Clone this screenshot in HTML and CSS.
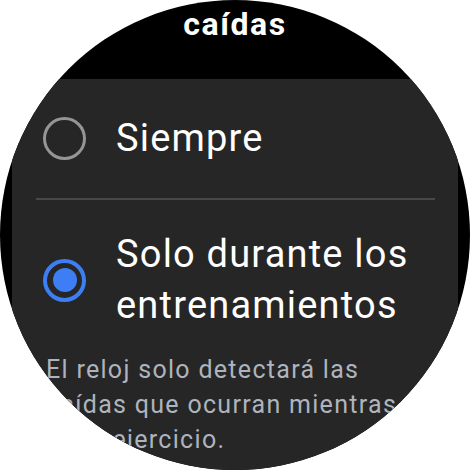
FILE: index.html
```html
<!DOCTYPE html>
<html lang="es">
<head>
<meta charset="utf-8">
<link rel="stylesheet" href="styles.css">
</head>
<body>
<div class="watch">
  <div class="title">caídas</div>
  <div class="card">
    <div class="option first">
      <span class="radio"></span>
      <span class="label">Siempre</span>
    </div>
    <div class="divider"></div>
    <div class="option second">
      <span class="radio on"><span class="dot"></span></span>
      <span class="label">Solo durante los entrenamientos</span>
    </div>
    <p class="desc">El reloj solo detectará las caídas que ocurran mientras hace ejercicio.</p>
  </div>
</div>
</body>
</html>
```
FILE: styles.css
```css
html, body {
  margin: 0;
  padding: 0;
  background: #ffffff;
}
.watch {
  width: 470px;
  height: 470px;
  border-radius: 50%;
  overflow: hidden;
  background: #000000;
  display: flex;
  flex-direction: column;
  font-family: Roboto, "Noto Sans", sans-serif;
}
.title {
  height: 79px;
  box-sizing: border-box;
  padding-top: 4px;
  text-align: center;
  color: #ffffff;
  font-weight: 700;
  font-size: 32px;
  line-height: 40px;
  letter-spacing: 1.6px;
}
.card {
  flex: 1;
  margin: 0 12px;
  background: #262626;
  border-radius: 10px 10px 0 0;
  padding: 0 23px 0 24px;
}
.option {
  display: flex;
  align-items: center;
  padding-left: 7px;
}
.option.first {
  height: 119px;
}
.option.second {
  height: 144px;
  padding-top: 8px;
}
.radio {
  flex: none;
  width: 43px;
  height: 43px;
  box-sizing: border-box;
  border-radius: 50%;
  border: 3px solid #959595;
  display: flex;
  align-items: center;
  justify-content: center;
}
.radio.on {
  border: 4px solid #3d7ef5;
}
.dot {
  width: 24px;
  height: 24px;
  border-radius: 50%;
  background: #3d7ef5;
}
.label {
  margin-left: 30px;
  color: #ffffff;
  font-size: 38px;
  line-height: 51px;
  letter-spacing: 1.2px;
}
.divider {
  height: 2px;
  background: #484848;
}
.desc {
  margin: 0;
  padding-left: 10px;
  color: #aeb4bd;
  font-size: 25px;
  line-height: 35px;
  letter-spacing: 1.3px;
}
```
